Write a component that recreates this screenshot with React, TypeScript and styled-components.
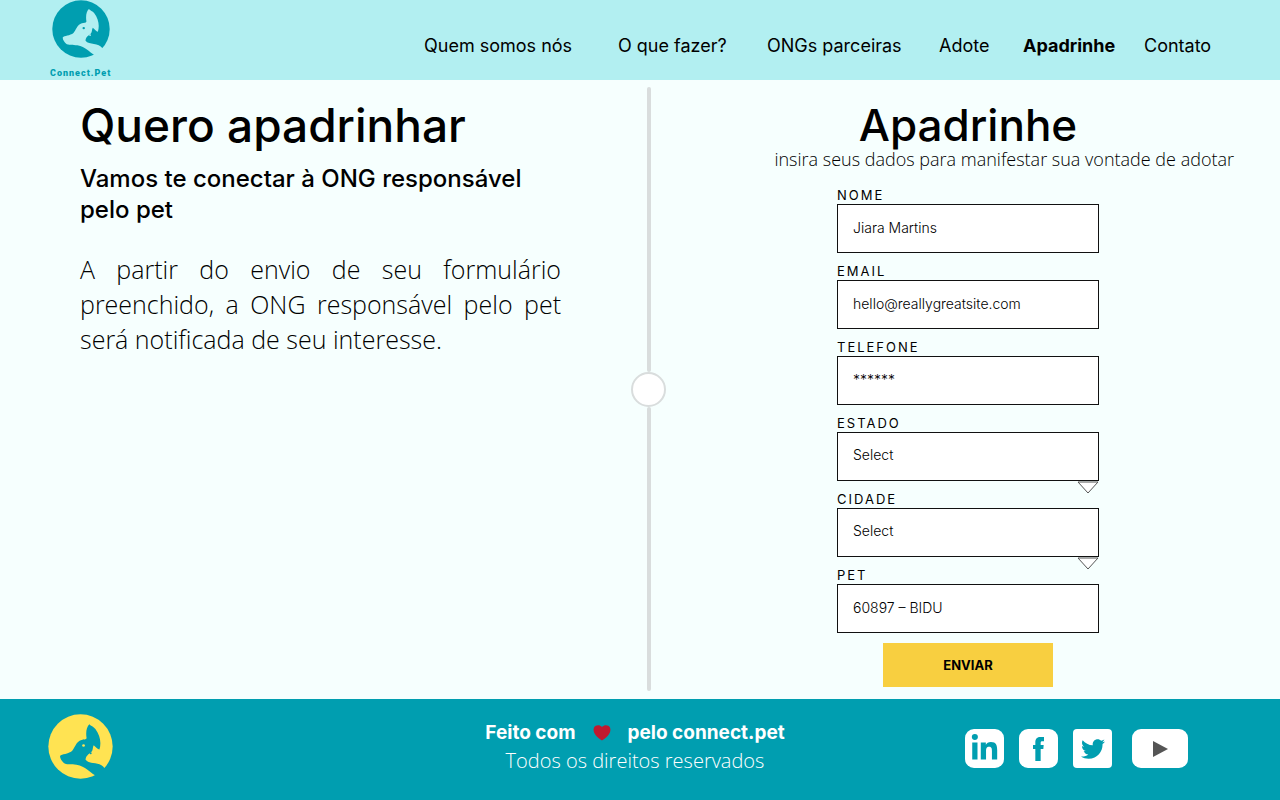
import React from "react";
import styled, { createGlobalStyle } from "styled-components";
import { FaLinkedinIn, FaTwitter } from "react-icons/fa";

const GlobalStyle = createGlobalStyle`
  *, *::before, *::after { box-sizing: border-box; }
  body { margin: 0; background: #f6fffe; color: #000; font-family: Inter, sans-serif; }
  h1, h2, p { margin: 0; }
`;

const Page = styled.div`
  min-height: 100vh;
  display: grid;
  grid-template-rows: auto 1fr auto;
`;

const Header = styled.header`
  height: 80px;
  padding: 0 64px 0 50px;
  display: flex;
  justify-content: space-between;
  align-items: flex-start;
  background: #b2eff1;
`;

const Brand = styled.a`
  display: flex;
  flex-direction: column;
  align-items: center;
  gap: 8px;
  color: #009eb0;
  font: 900 9px/14px Roboto, sans-serif;
  letter-spacing: 1px;
  text-decoration: none;
`;

const Nav = styled.nav`
  display: grid;
  grid-template-columns: 194px 149px 172px 84px 121px 72px;
  padding-top: 34px;
`;

const NavLink = styled.a<{ $active?: boolean }>`
  color: #000;
  font-size: 18px;
  line-height: 24px;
  font-weight: ${(p) => (p.$active ? 700 : 400)};
  text-decoration: none;
  white-space: nowrap;
`;

const Main = styled.main`
  display: grid;
  grid-template-columns: 631fr 35px 614fr;
`;

const Intro = styled.section`
  padding: 20px 70px 0 80px;
`;

const Title = styled.h1<{ $large?: boolean }>`
  font-size: ${(p) => (p.$large ? 46 : 44)}px;
  line-height: 50px;
  font-weight: 500;
`;

const Lead = styled.h2`
  margin-top: 13px;
  font-size: 24px;
  line-height: 31px;
  font-weight: 500;
`;

const Description = styled.p`
  margin-top: 27px;
  font: 300 25px/35px "Open Sans", sans-serif;
  text-align: justify;
`;

const Divider = styled.div`
  display: flex;
  flex-direction: column;
  align-items: center;
  padding: 7px 0 8px;
`;

const Line = styled.span<{ $grow: number }>`
  flex: ${(p) => p.$grow} 1 0;
  width: 4px;
  border-radius: 2px;
  background: #d9dddd;
`;

const Knob = styled.span`
  width: 35px;
  height: 35px;
  border: 2px solid #d9dddd;
  border-radius: 50%;
  background: #fff;
`;

const Signup = styled.section`
  display: flex;
  flex-direction: column;
  align-items: center;
  padding: 20px 10px 12px 0;
`;

const Hint = styled.p`
  align-self: flex-end;
  margin-right: 36px;
  font: 300 18px/18px "Open Sans", sans-serif;
`;

const Form = styled.form`
  width: 262px;
  margin-top: 18px;
  display: flex;
  flex-direction: column;
  gap: 9px;
`;

const Field = styled.div`
  position: relative;
  display: flex;
  flex-direction: column;
`;

const Label = styled.label`
  font-size: 13px;
  line-height: 18px;
  letter-spacing: 2px;
`;

const Input = styled.input`
  height: 49px;
  width: 100%;
  padding: 0 15px 3px;
  border: 1px solid #111;
  border-radius: 0;
  background: #fff;
  color: #000;
  font: 300 14px/20px Inter, sans-serif;
`;

const Select = styled(Input).attrs({ as: "select" })`
  appearance: none;
`;

const Arrow = styled.svg`
  position: absolute;
  top: 100%;
  right: 0;
`;

const Submit = styled.button`
  align-self: center;
  width: 170px;
  height: 44px;
  margin-top: 1px;
  padding-bottom: 2px;
  border: 0;
  background: #f8cf40;
  color: #000;
  font: 700 13px/20px Inter, sans-serif;
`;

const Footer = styled.footer`
  min-height: 101px;
  padding: 0 48px;
  display: grid;
  grid-template-columns: 1fr auto 1fr;
  align-items: center;
  background: #009eb0;
  color: #fff;
`;

const FooterLogo = styled.div`
  display: flex;
  padding-bottom: 6px;
`;

const Credits = styled.div`
  padding: 0 10px 5px 0;
  text-align: center;
`;

const MadeWith = styled.p`
  display: flex;
  align-items: center;
  justify-content: center;
  gap: 17px;
  font-size: 19px;
  line-height: 28px;
  font-weight: 700;
`;

const Rights = styled.p`
  font: 300 20px/28px "Open Sans", sans-serif;
`;

const Social = styled.nav`
  display: flex;
  align-items: center;
  justify-content: flex-end;
  gap: 15px;
  padding: 0 44px 2px 0;
`;

const SocialLink = styled.a<{ $wide?: boolean; $radius: number }>`
  width: ${(p) => (p.$wide ? 56 : 39)}px;
  height: 39px;
  margin-left: ${(p) => (p.$wide ? 5 : 0)}px;
  display: flex;
  align-items: center;
  justify-content: center;
  border-radius: ${(p) => p.$radius}px;
  background: #fff;
  color: #009eb0;
`;

function Logo({ size, disc, cut }: { size: number; disc: string; cut: string }) {
  return (
    <svg width={size} height={size} viewBox="26 71 192 192" aria-hidden="true">
      <circle cx="122" cy="167" r="95" fill={disc} />
      <path
        fill={cut}
        d="M62 194C66 189 86 189 97 180C106 171 108 153 125 148C132 145 138 148 140 142C137 125 140 108 148 101C153 107 160 107 166 115C180 134 184 155 178 176C172 175 168 169 161 163C157 169 160 177 154 183C146 190 138 193 137 206C149 221 181 211 193 231L225 231L225 265L168 265L165 252C148 243 138 226 110 221C95 219 80 222 72 215C66 209 60 200 62 194Z"
      />
      <circle cx="131" cy="164" r="4" fill={disc} />
      <circle cx="152" cy="187" r="3" fill={cut} />
    </svg>
  );
}

function DropArrow() {
  return (
    <Arrow width="22" height="13" viewBox="0 0 22 13" aria-hidden="true">
      <path d="M1 1H21L11 12Z" fill="#fff" stroke="#555" />
    </Arrow>
  );
}

const links = ["Quem somos nós", "O que fazer?", "ONGs parceiras", "Adote", "Apadrinhe", "Contato"];

const fields = [
  { id: "nome", label: "NOME", type: "text", value: "Jiara Martins" },
  { id: "email", label: "EMAIL", type: "email", value: "hello@reallygreatsite.com" },
  { id: "telefone", label: "TELEFONE", type: "tel", value: "******" },
  { id: "estado", label: "ESTADO", type: "select", value: "Select" },
  { id: "cidade", label: "CIDADE", type: "select", value: "Select" },
  { id: "pet", label: "PET", type: "text", value: "60897 – BIDU" },
];

export default function App() {
  return (
    <Page>
      <GlobalStyle />
      <Header>
        <Brand href="#">
          <Logo size={58} disc="#009eb0" cut="#b2eff1" />
          Connect.Pet
        </Brand>
        <Nav>
          {links.map((text) => (
            <NavLink key={text} href="#" $active={text === "Apadrinhe"}>
              {text}
            </NavLink>
          ))}
        </Nav>
      </Header>
      <Main>
        <Intro>
          <Title $large>Quero apadrinhar</Title>
          <Lead>Vamos te conectar à ONG responsável pelo pet</Lead>
          <Description>
            A partir do envio de seu formulário preenchido, a ONG responsável pelo pet será
            notificada de seu interesse.
          </Description>
        </Intro>
        <Divider>
          <Line $grow={285} />
          <Knob />
          <Line $grow={284} />
        </Divider>
        <Signup>
          <Title>Apadrinhe</Title>
          <Hint>insira seus dados para manifestar sua vontade de adotar</Hint>
          <Form>
            {fields.map((f) => (
              <Field key={f.id}>
                <Label htmlFor={f.id}>{f.label}</Label>
                {f.type === "select" ? (
                  <>
                    <Select id={f.id}>
                      <option>{f.value}</option>
                    </Select>
                    <DropArrow />
                  </>
                ) : (
                  <Input id={f.id} type={f.type} defaultValue={f.value} />
                )}
              </Field>
            ))}
            <Submit type="button">ENVIAR</Submit>
          </Form>
        </Signup>
      </Main>
      <Footer>
        <FooterLogo>
          <Logo size={65} disc="#ffe352" cut="#009eb0" />
        </FooterLogo>
        <Credits>
          <MadeWith>
            Feito com
            <svg width="18" height="16" viewBox="0 0 18 16" role="img" aria-label="amor">
              <path
                fill="#c0192f"
                d="M9 2C11-.5 15.500-.5 17 2.500C19 8 13.500 13 9 15.500C4.500 13-1 8 1 2.500C2.500-.5 7-.5 9 2Z"
              />
            </svg>
            pelo connect.pet
          </MadeWith>
          <Rights>Todos os direitos reservados</Rights>
        </Credits>
        <Social aria-label="Redes sociais">
          <SocialLink href="#" aria-label="LinkedIn" $radius={9}>
            <FaLinkedinIn size={29} />
          </SocialLink>
          <SocialLink href="#" aria-label="Facebook" $radius={9}>
            <svg width="11" height="24" viewBox="0 0 33 72" aria-hidden="true">
              <path
                fill="currentColor"
                d="M33 0V13H28C24 13 23 15 23 18V24H32L31 36H23V72H7V36H0V24H7V16C7 5 13 0 22 0Z"
              />
            </svg>
          </SocialLink>
          <SocialLink href="#" aria-label="Twitter" $radius={4}>
            <FaTwitter size={24} />
          </SocialLink>
          <SocialLink href="#" aria-label="YouTube" $radius={9} $wide>
            <svg width="15" height="16" viewBox="0 0 15 16" aria-hidden="true">
              <path d="M0 0L15 8L0 16Z" fill="#555" />
            </svg>
          </SocialLink>
        </Social>
      </Footer>
    </Page>
  );
}
